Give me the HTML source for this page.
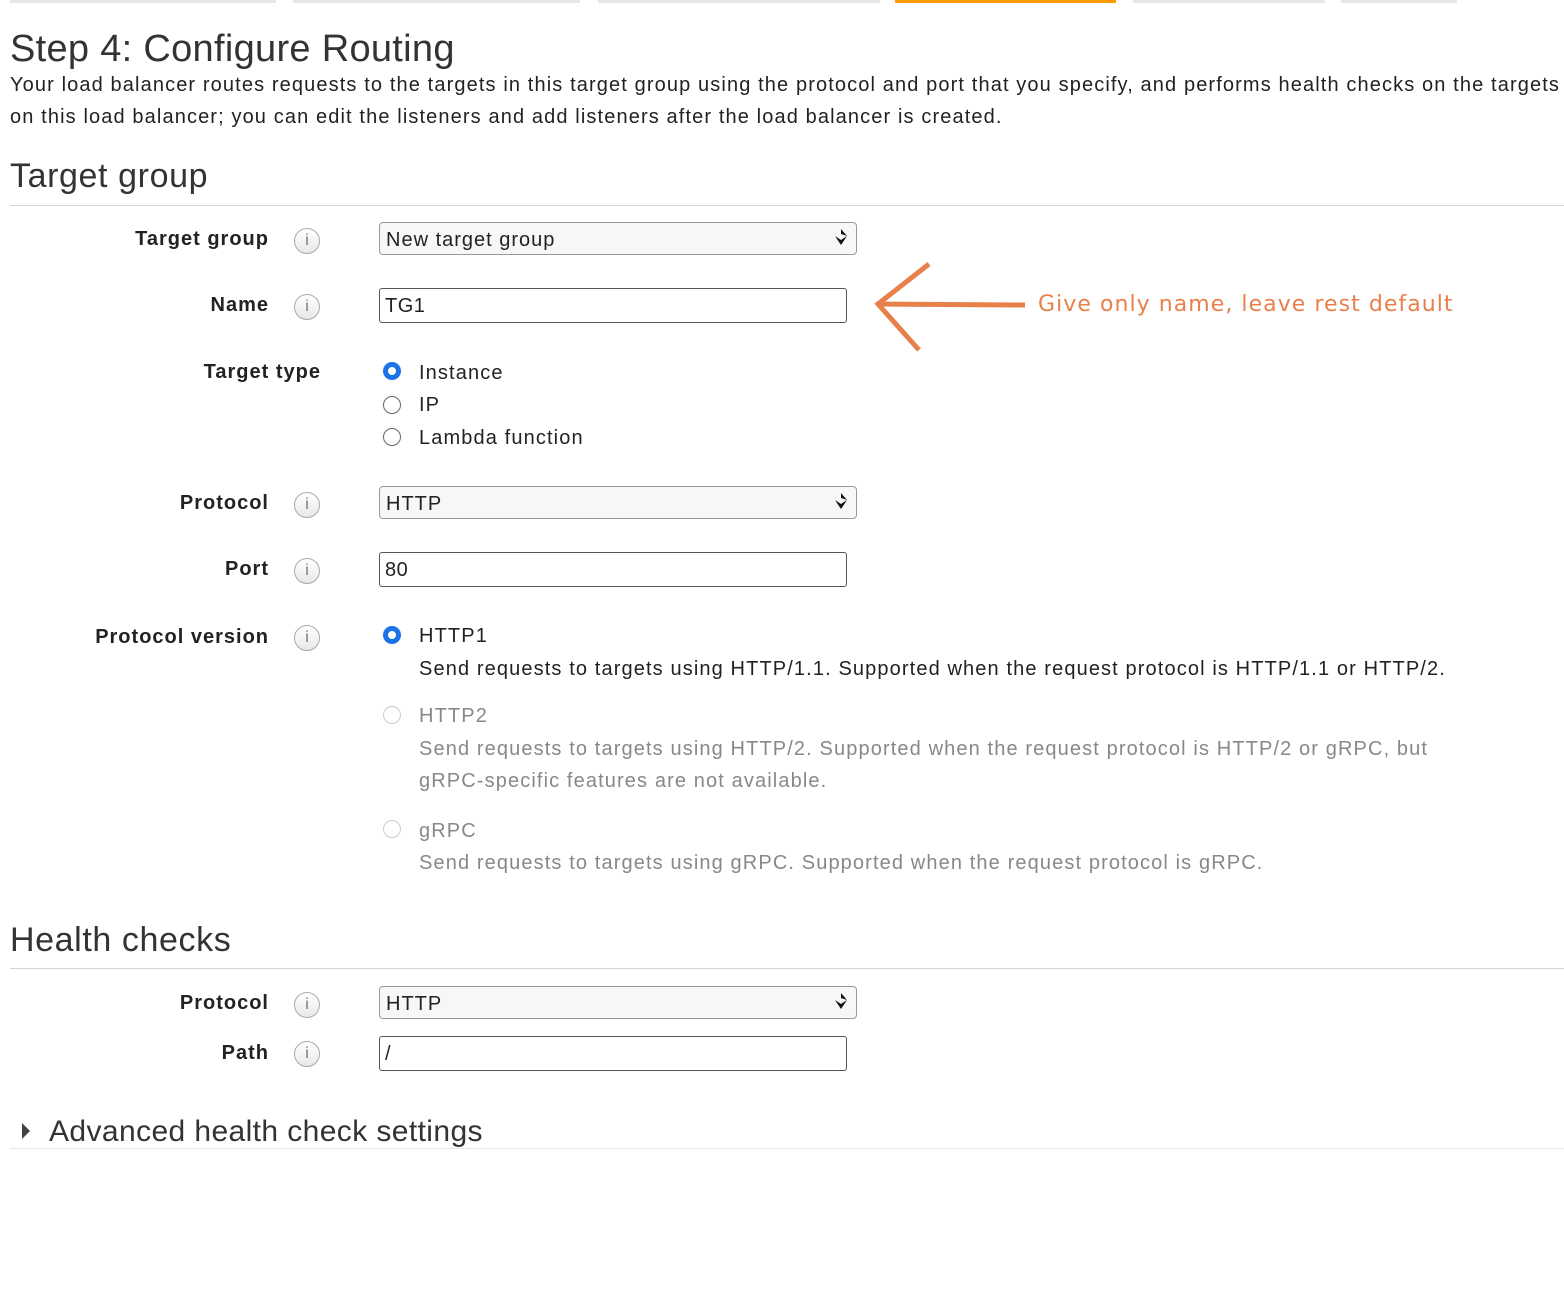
<!DOCTYPE html>
<html><head><meta charset="utf-8"><style>
html,body{margin:0;padding:0}
body{width:1564px;height:1316px;background:#fff;position:relative;overflow:hidden;font-family:"Liberation Sans",Arial,sans-serif;color:#222}
#w{position:absolute;left:0;top:0;width:1564px;height:1316px;overflow:hidden}
.a{position:absolute;white-space:nowrap;line-height:1}
.t{font-size:20px;letter-spacing:1.12px}
.lbl{font-size:20px;font-weight:bold;right:1295px;text-align:right;letter-spacing:1px}
.h{color:#333}
.bar{position:absolute;top:0;height:3px;background:#e6e6e6}
.hr{position:absolute;left:10px;right:0;height:1px;background:#d5d5d5}
.sel{position:absolute;left:379px;box-sizing:border-box;width:478px;height:33px;border:1px solid #999;border-radius:4px;background:#f7f7f7;font-size:20px;line-height:34px;padding-left:6px;letter-spacing:1px}
.inp{position:absolute;left:379px;width:468px;height:35px;border:1px solid #555;border-radius:3px;box-sizing:border-box;font-size:20px;line-height:35px;padding-left:5px;letter-spacing:0.5px}
.info{position:absolute;left:294px;width:24px;height:24px;border:1px solid #aaa;border-radius:50%;background:linear-gradient(#fff,#e8e8e8);color:#777;font-size:16px;text-align:center;line-height:24px}
.r{position:absolute;left:383px;width:18px;height:18px;border:1.5px solid #666;border-radius:50%;box-sizing:border-box}
.r.on{border:5px solid #1a73e8;}
.r.dis{border-color:#ccc}
.g{color:#888}
.arr{position:absolute;right:6px;top:5px}
</style></head><body><div id="w">
<div class="bar" style="left:10px;width:266px"></div>
<div class="bar" style="left:293px;width:287px"></div>
<div class="bar" style="left:598px;width:282px"></div>
<div class="bar" style="left:895px;width:221px;background:#f90"></div>
<div class="bar" style="left:1133px;width:192px"></div>
<div class="bar" style="left:1341px;width:116px"></div>

<div class="a h" style="left:10px;top:30px;font-size:38px;letter-spacing:0.3px">Step 4: Configure Routing</div>
<div class="a t" style="left:10px;top:75px">Your load balancer routes requests to the targets in this target group using the protocol and port that you specify, and performs health checks on the targets</div>
<div class="a t" style="left:10px;top:107px">on this load balancer; you can edit the listeners and add listeners after the load balancer is created.</div>

<div class="a h" style="left:10px;top:159px;font-size:34px;letter-spacing:0.6px">Target group</div>
<div class="hr" style="top:205px"></div>

<div class="a lbl" style="top:229px">Target group</div>
<div class="info" style="top:228px">i</div>
<div class="sel" style="top:222px">New target group<svg class="arr" width="18" height="20" viewBox="0 0 18 20"><path d="M9 1 L15 8 L9 6 Z" fill="#111"/><path d="M3 8 L9 17 L15 8 L9 12 Z" fill="#111"/></svg></div>

<div class="a lbl" style="top:295px">Name</div>
<div class="info" style="top:294px">i</div>
<div class="inp" style="top:288px">TG1</div>

<svg style="position:absolute;left:0;top:0" width="1564" height="400"><g stroke="#e8804a" stroke-width="5" fill="none"><path d="M878 304 L1025 305"/><path d="M929 264 L878 304 L919 350"/></g></svg>
<div class="a" style="left:1038px;top:294px;font-size:22px;color:#e8804a;font-family:'DejaVu Sans',Verdana,sans-serif;letter-spacing:1.05px">Give only name, leave rest default</div>

<div class="a lbl" style="top:362px;right:1243px">Target type</div>
<div class="r on" style="top:362px"></div><div class="a t" style="left:419px;top:363px">Instance</div>
<div class="r" style="top:396px"></div><div class="a t" style="left:419px;top:395px">IP</div>
<div class="r" style="top:428px"></div><div class="a t" style="left:419px;top:428px">Lambda function</div>

<div class="a lbl" style="top:493px">Protocol</div>
<div class="info" style="top:492px">i</div>
<div class="sel" style="top:486px">HTTP<svg class="arr" width="18" height="20" viewBox="0 0 18 20"><path d="M9 1 L15 8 L9 6 Z" fill="#111"/><path d="M3 8 L9 17 L15 8 L9 12 Z" fill="#111"/></svg></div>

<div class="a lbl" style="top:559px">Port</div>
<div class="info" style="top:558px">i</div>
<div class="inp" style="top:552px">80</div>

<div class="a lbl" style="top:627px">Protocol version</div>
<div class="info" style="top:625px">i</div>
<div class="r on" style="top:626px"></div><div class="a t" style="left:419px;top:626px">HTTP1</div>
<div class="a t" style="left:419px;top:659px">Send requests to targets using HTTP/1.1. Supported when the request protocol is HTTP/1.1 or HTTP/2.</div>
<div class="r dis" style="top:706px"></div><div class="a t g" style="left:419px;top:706px">HTTP2</div>
<div class="a t g" style="left:419px;top:739px">Send requests to targets using HTTP/2. Supported when the request protocol is HTTP/2 or gRPC, but</div>
<div class="a t g" style="left:419px;top:771px">gRPC-specific features are not available.</div>
<div class="r dis" style="top:820px"></div><div class="a t g" style="left:419px;top:821px">gRPC</div>
<div class="a t g" style="left:419px;top:853px">Send requests to targets using gRPC. Supported when the request protocol is gRPC.</div>

<div class="a h" style="left:10px;top:923px;font-size:34px;letter-spacing:0.6px">Health checks</div>
<div class="hr" style="top:968px"></div>

<div class="a lbl" style="top:993px">Protocol</div>
<div class="info" style="top:992px">i</div>
<div class="sel" style="top:986px">HTTP<svg class="arr" width="18" height="20" viewBox="0 0 18 20"><path d="M9 1 L15 8 L9 6 Z" fill="#111"/><path d="M3 8 L9 17 L15 8 L9 12 Z" fill="#111"/></svg></div>

<div class="a lbl" style="top:1043px">Path</div>
<div class="info" style="top:1041px">i</div>
<div class="inp" style="top:1036px">/</div>

<svg style="position:absolute;left:20px;top:1121px" width="12" height="20"><path d="M2 2 L10 10 L2 18 Z" fill="#444"/></svg>
<div class="a h" style="left:49px;top:1117px;font-size:30px;letter-spacing:0.4px">Advanced health check settings</div>
<div class="hr" style="top:1148px;background:#e6e6e6"></div>
</div></body></html>
